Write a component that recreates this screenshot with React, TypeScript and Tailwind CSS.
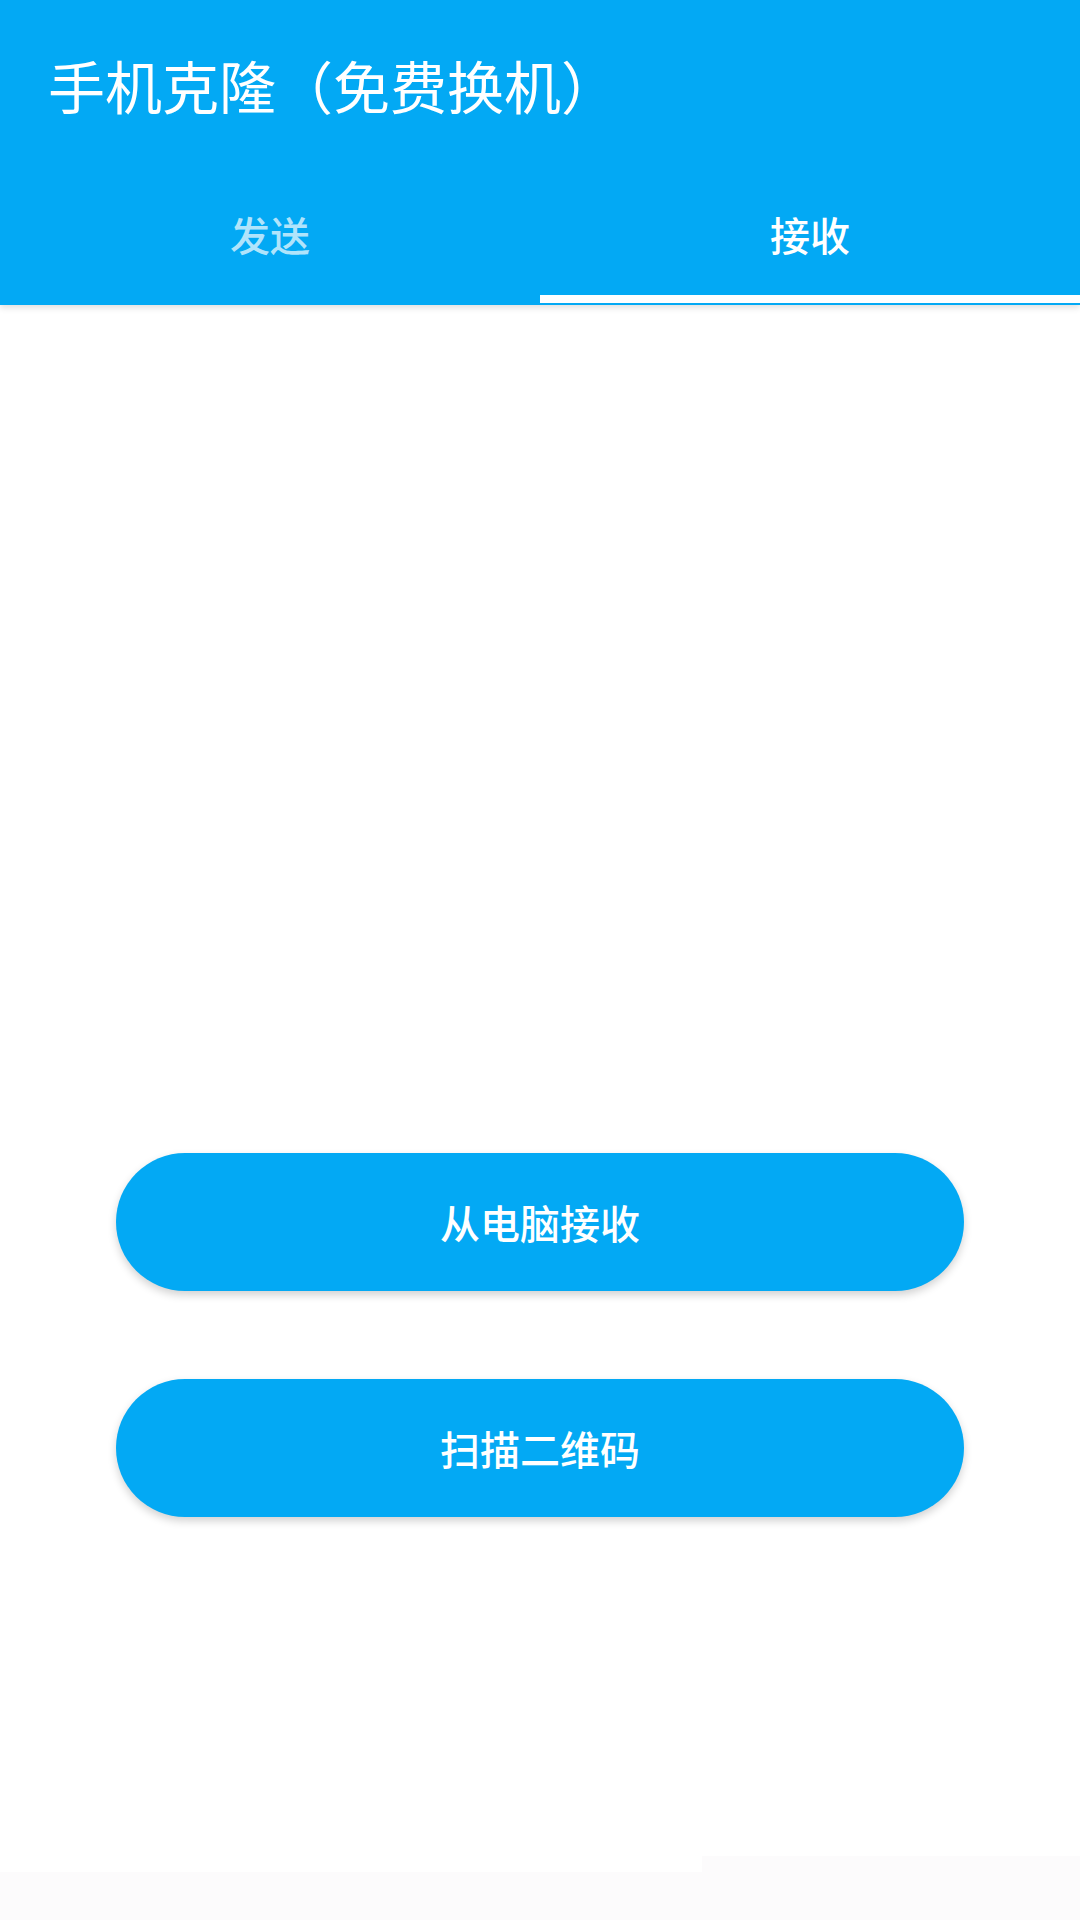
/**
 * Phone clone screen – receive tab
 * Two big rounded actions under a blue app bar with tabs
 */

const FONT = "font-['Noto_Sans_CJK_SC','Noto_Sans',sans-serif]"

function TabBar({ active }: { active: number }) {
  const tabs = ['发送', '接收']
  return (
    <div className="flex h-[133px]">
      {tabs.map((label, i) => (
        <div key={label} className="flex-1 flex flex-col">
          <div
            className={
              i === active
                ? 'flex-1 flex items-center justify-center pt-[3px] text-[40px] font-medium text-white'
                : 'flex-1 flex items-center justify-center pt-[3px] text-[40px] font-medium text-white/70'
            }
          >
            {label}
          </div>
          <div className={i === active ? 'h-[8px] bg-white' : 'h-[8px]'} />
        </div>
      ))}
    </div>
  )
}

function ActionButton({ label }: { label: string }) {
  return (
    <button className="w-full h-[138px] rounded-full bg-[#03A9F4] text-white text-[40px] font-medium shadow-[0_4px_8px_rgba(0,0,0,0.18)]">
      {label}
    </button>
  )
}

export default function App() {
  return (
    <div className={`w-[1080px] h-[1920px] flex flex-col bg-white ${FONT}`}>
      <header className="h-[305px] bg-[#03A9F4] flex flex-col shadow-[0_3px_6px_rgba(0,0,0,0.12)] z-10">
        <div className="h-[170px] flex items-center pl-[48px] text-[57px] font-normal text-white">
          手机克隆（免费换机）
        </div>
        <TabBar active={1} />
      </header>

      <main className="flex-1 flex flex-col px-[116px] pt-[848px] gap-[88px]">
        <ActionButton label="从电脑接收" />
        <ActionButton label="扫描二维码" />
      </main>

      <div className="flex h-[16px]">
        <div className="flex-1" />
        <div className="w-[378px] bg-[#fcfbfc]" />
      </div>
      <div className="h-[48px] bg-[#fcfbfc]" />
    </div>
  )
}
